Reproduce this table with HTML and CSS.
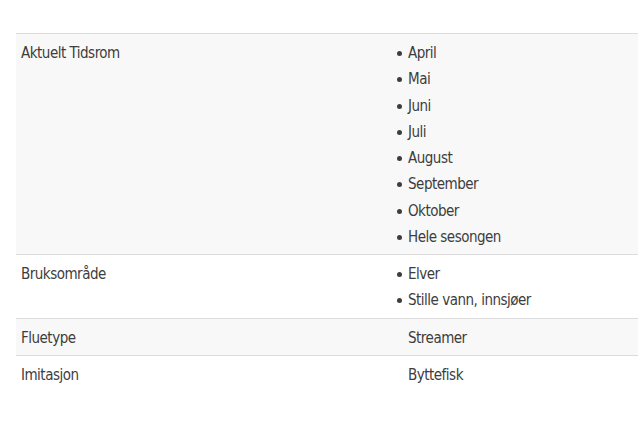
FILE: index.html
```html
<!DOCTYPE html>
<html lang="no">
<head>
<meta charset="utf-8">
<title>Egenskaper</title>
<link rel="stylesheet" href="styles.css">
</head>
<body>
<table class="attrs">
  <tbody>
    <tr class="odd">
      <th>Aktuelt Tidsrom</th>
      <td>
        <ul>
          <li>April</li>
          <li>Mai</li>
          <li>Juni</li>
          <li>Juli</li>
          <li>August</li>
          <li>September</li>
          <li>Oktober</li>
          <li>Hele sesongen</li>
        </ul>
      </td>
    </tr>
    <tr>
      <th>Bruksområde</th>
      <td>
        <ul>
          <li>Elver</li>
          <li>Stille vann, innsjøer</li>
        </ul>
      </td>
    </tr>
    <tr class="odd">
      <th>Fluetype</th>
      <td>Streamer</td>
    </tr>
    <tr>
      <th>Imitasjon</th>
      <td>Byttefisk</td>
    </tr>
  </tbody>
</table>
</body>
</html>
```
FILE: styles.css
```css
html, body {
  margin: 0;
  padding: 0;
  background: #fff;
}
body {
  padding: 33px 0 0 16px;
  font-family: "DejaVu Sans Condensed", "DejaVu Sans", sans-serif;
  font-stretch: condensed;
  font-size: 15px;
  letter-spacing: -0.5px;
  line-height: 26.25px;
  color: #3d3d3d;
}
.attrs {
  width: 640px;
  border-collapse: collapse;
  border-top: 1px solid #dcdcdc;
}
.attrs tr {
  border-bottom: 1px solid #dcdcdc;
}
.attrs tr:last-child {
  border-bottom: none;
}
.attrs tr.odd {
  background: #f8f8f8;
}
.attrs th,
.attrs td {
  text-align: left;
  vertical-align: top;
  font-weight: normal;
  padding: 6px 0 4px 5px;
}
.attrs th {
  width: 366px;
}
.attrs td {
  padding-left: 21px;
}
.attrs ul {
  margin: 0;
  padding: 0;
  list-style: none;
}
.attrs li {
  position: relative;
}
.attrs li::before {
  content: "";
  position: absolute;
  left: -11px;
  top: 11px;
  width: 5px;
  height: 5px;
  border-radius: 50%;
  background: #3d3d3d;
}
```
